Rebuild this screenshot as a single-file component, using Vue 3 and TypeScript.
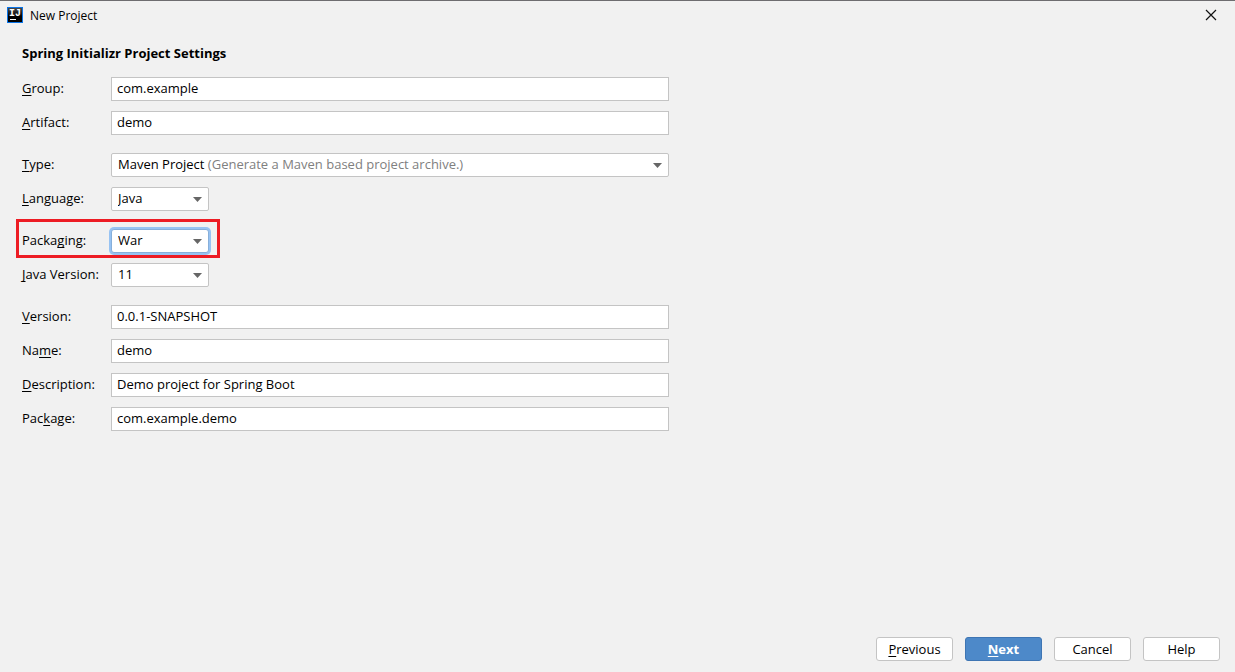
<script setup lang="ts">
import { ref } from 'vue'

interface Field {
  id: string
  label: [string, string, string]
  kind: 'text' | 'select'
  value: string
  options?: string[]
  hint?: string
  marked?: boolean
}

const groups = ref<Field[][]>([
  [
    { id: 'group', label: ['', 'G', 'roup:'], kind: 'text', value: 'com.example' },
    { id: 'artifact', label: ['', 'A', 'rtifact:'], kind: 'text', value: 'demo' },
  ],
  [
    {
      id: 'type',
      label: ['', 'T', 'ype:'],
      kind: 'select',
      value: 'Maven Project',
      options: ['Maven Project'],
      hint: '(Generate a Maven based project archive.)',
    },
    { id: 'language', label: ['', 'L', 'anguage:'], kind: 'select', value: 'Java', options: ['Java'] },
  ],
  [
    { id: 'packaging', label: ['Packa', 'g', 'ing:'], kind: 'select', value: 'War', options: ['War'], marked: true },
    { id: 'java-version', label: ['', 'J', 'ava Version:'], kind: 'select', value: '11', options: ['11'] },
  ],
  [
    { id: 'version', label: ['', 'V', 'ersion:'], kind: 'text', value: '0.0.1-SNAPSHOT' },
    { id: 'name', label: ['Na', 'm', 'e:'], kind: 'text', value: 'demo' },
    { id: 'description', label: ['', 'D', 'escription:'], kind: 'text', value: 'Demo project for Spring Boot' },
    { id: 'package', label: ['Pac', 'k', 'age:'], kind: 'text', value: 'com.example.demo' },
  ],
])
</script>

<template>
  <div class="window">
    <header class="titlebar">
      <span class="logo"><span class="logo-text">IJ</span><span class="logo-bar"></span></span>
      <span class="title">New Project</span>
      <button class="close" type="button" aria-label="Close">
        <svg width="12" height="12" viewBox="0 0 12 12">
          <path d="M1 1 L11 11 M11 1 L1 11" fill="none" stroke="#111" stroke-width="1.2" />
        </svg>
      </button>
    </header>

    <main class="content">
      <h1>Spring Initializr Project Settings</h1>
      <form class="form" @submit.prevent>
        <div v-for="(group, i) in groups" :key="i" class="group">
          <div v-for="f in group" :key="f.id" class="row" :class="{ marked: f.marked }">
            <label :for="f.id">{{ f.label[0] }}<span class="key">{{ f.label[1] }}</span>{{ f.label[2] }}</label>
            <input v-if="f.kind === 'text'" :id="f.id" v-model="f.value" type="text" spellcheck="false" />
            <div v-else class="combo" :class="{ wide: f.hint, focused: f.marked }">
              <select :id="f.id" v-model="f.value">
                <option v-for="o in f.options" :key="o" :value="o">{{ o }}</option>
              </select>
              <span v-if="f.hint" class="shown" aria-hidden="true">{{ f.value }} <span class="hint">{{ f.hint }}</span></span>
              <svg class="arrow" width="9" height="5" viewBox="0 0 9 5"><path d="M0 0H9L4.5 5Z" fill="#666" /></svg>
            </div>
          </div>
        </div>
      </form>
    </main>

    <footer class="actions">
      <button type="button"><span class="key">P</span>revious</button>
      <button type="button" class="primary"><span class="key">N</span>ext</button>
      <button type="button">Cancel</button>
      <button type="button">Help</button>
    </footer>
  </div>
</template>

<style>
body {
  background: #f1f1f1;
}
</style>

<style scoped>
.window {
  box-sizing: border-box;
  min-height: 100vh;
  display: flex;
  flex-direction: column;
  border-top: 1px solid #6e6d70;
  background: #f1f1f1;
  color: #000;
  font: 13px/18px "Open Sans", "Noto Sans", sans-serif;
}
.titlebar {
  display: flex;
  align-items: center;
  height: 28px;
  padding: 0 18px 0 7px;
}
.logo {
  box-sizing: border-box;
  display: flex;
  flex-direction: column;
  width: 16px;
  height: 16px;
  padding: 1px;
  border: 1px solid #0a74e8;
  background: linear-gradient(#484848, #000 60%);
}
.logo-text {
  color: #fff;
  font: bold 10px/9px "Liberation Mono", monospace;
}
.logo-bar {
  width: 6px;
  height: 1px;
  margin: 1px 0 0 1px;
  background: #fff;
}
.title {
  flex: 1;
  margin-left: 7px;
  font-size: 12px;
  line-height: 16px;
  padding-top: 2px;
}
.close {
  display: flex;
  padding: 0;
  border: 0;
  background: none;
}
.content {
  flex: 1;
  padding: 15px 22px;
}
h1 {
  margin: 0 0 15px;
  font-size: 13px;
  line-height: 18px;
  font-weight: bold;
}
.form {
  display: flex;
  flex-direction: column;
  gap: 18px;
  max-width: 647px;
}
.group {
  display: flex;
  flex-direction: column;
  gap: 10px;
}
.row {
  position: relative;
  display: grid;
  grid-template-columns: 89px minmax(0, 1fr);
  align-items: center;
  height: 24px;
}
.row label {
  padding-bottom: 2px;
  white-space: nowrap;
}
.marked::after {
  content: "";
  position: absolute;
  top: -10px;
  left: -6px;
  box-sizing: border-box;
  width: 204px;
  height: 39px;
  border: 3px solid #ed1c24;
  pointer-events: none;
}
.key {
  text-decoration: underline;
  text-decoration-thickness: 1px;
  text-underline-offset: 2px;
  text-decoration-skip-ink: none;
}
input,
select {
  box-sizing: border-box;
  width: 100%;
  height: 24px;
  margin: 0;
  border: 1px solid #c4c4c4;
  background: #fff;
  color: #000;
  font: inherit;
  outline: none;
}
input {
  padding: 0 5px 2px;
}
select {
  appearance: none;
  padding: 0 24px 2px 6px;
  border-radius: 2px;
}
.combo {
  position: relative;
  width: 98px;
}
.combo.wide {
  width: 100%;
}
.wide select {
  color: transparent;
}
.wide option {
  color: #000;
}
.focused select {
  border-color: #87afda;
  border-radius: 3px;
  box-shadow: 0 0 0 2px #97c3f3;
}
.shown {
  position: absolute;
  inset: 2px 24px 4px 7px;
  overflow: hidden;
  white-space: nowrap;
  pointer-events: none;
}
.hint {
  color: #808080;
}
.arrow {
  position: absolute;
  top: 10px;
  right: 7px;
  pointer-events: none;
}
.actions {
  display: flex;
  justify-content: flex-end;
  gap: 12px;
  padding: 0 15px 11px;
}
.actions button {
  box-sizing: border-box;
  width: 77px;
  height: 24px;
  padding: 0;
  border: 1px solid #c4c4c4;
  border-radius: 3px;
  background: #fff;
  color: #000;
  font: inherit;
}
.actions .primary {
  border-color: #3e75b3;
  background: #4d89c9;
  color: #fff;
  font-weight: bold;
}
</style>
